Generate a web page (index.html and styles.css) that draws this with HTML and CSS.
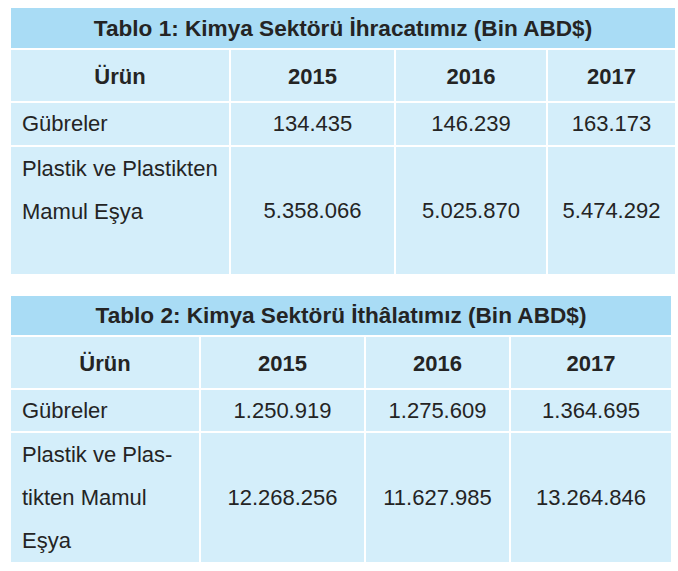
FILE: index.html
```html
<!DOCTYPE html>
<html lang="tr">
<head>
<meta charset="utf-8">
<title>Kimya Sektörü</title>
<link rel="stylesheet" href="styles.css">
</head>
<body>
<div class="page">
  <section class="tablo tablo-1">
    <div class="baslik">Tablo 1: Kimya Sektörü İhracatımız (Bin ABD$)</div>
    <div class="grid">
      <div class="cell head">Ürün</div>
      <div class="cell head">2015</div>
      <div class="cell head">2016</div>
      <div class="cell head">2017</div>

      <div class="cell name">Gübreler</div>
      <div class="cell num">134.435</div>
      <div class="cell num">146.239</div>
      <div class="cell num">163.173</div>

      <div class="cell name tall">Plastik ve Plastikten<br>Mamul Eşya</div>
      <div class="cell num">5.358.066</div>
      <div class="cell num">5.025.870</div>
      <div class="cell num">5.474.292</div>
    </div>
  </section>

  <section class="tablo tablo-2">
    <div class="baslik">Tablo 2: Kimya Sektörü İthâlatımız (Bin ABD$)</div>
    <div class="grid">
      <div class="cell head">Ürün</div>
      <div class="cell head">2015</div>
      <div class="cell head">2016</div>
      <div class="cell head">2017</div>

      <div class="cell name">Gübreler</div>
      <div class="cell num">1.250.919</div>
      <div class="cell num">1.275.609</div>
      <div class="cell num">1.364.695</div>

      <div class="cell name tall">Plastik ve Plas-<br>tikten Mamul<br>Eşya</div>
      <div class="cell num">12.268.256</div>
      <div class="cell num">11.627.985</div>
      <div class="cell num">13.264.846</div>
    </div>
  </section>
</div>
</body>
</html>
```

FILE: styles.css
```css
html, body {
  margin: 0;
  padding: 0;
  background: #ffffff;
}

body {
  font-family: "Liberation Sans", Arial, sans-serif;
  font-size: 22px;
  color: #242424;
}

.page {
  padding: 8px 0 0 11px;
  display: flex;
  flex-direction: column;
  gap: 22px;
}

.tablo {
  display: flex;
  flex-direction: column;
  gap: 2px;
  background: #ffffff;
}

.tablo-1 { width: 664px; }
.tablo-2 { width: 660px; }

.baslik {
  background: #a9dcf5;
  font-weight: bold;
  font-size: 22.6px;
  text-align: center;
  height: 40px;
  line-height: 41px;
}

.tablo-2 .baslik {
  height: 39px;
  line-height: 40px;
}

.grid {
  display: grid;
  gap: 2px;
}

.tablo-1 .grid {
  grid-template-columns: 218px 163px 150px 127px;
  grid-template-rows: 51px 42px 127px;
}

.tablo-2 .grid {
  grid-template-columns: 188px 163px 143px 160px;
  grid-template-rows: 51px 41px 129px;
}

.cell {
  background: #d4eefa;
  display: flex;
  align-items: center;
  justify-content: center;
}

.head {
  font-weight: bold;
  padding-top: 2px;
}

.name {
  justify-content: flex-start;
  padding-left: 11px;
}

.tall {
  display: block;
  line-height: 43px;
}
```
